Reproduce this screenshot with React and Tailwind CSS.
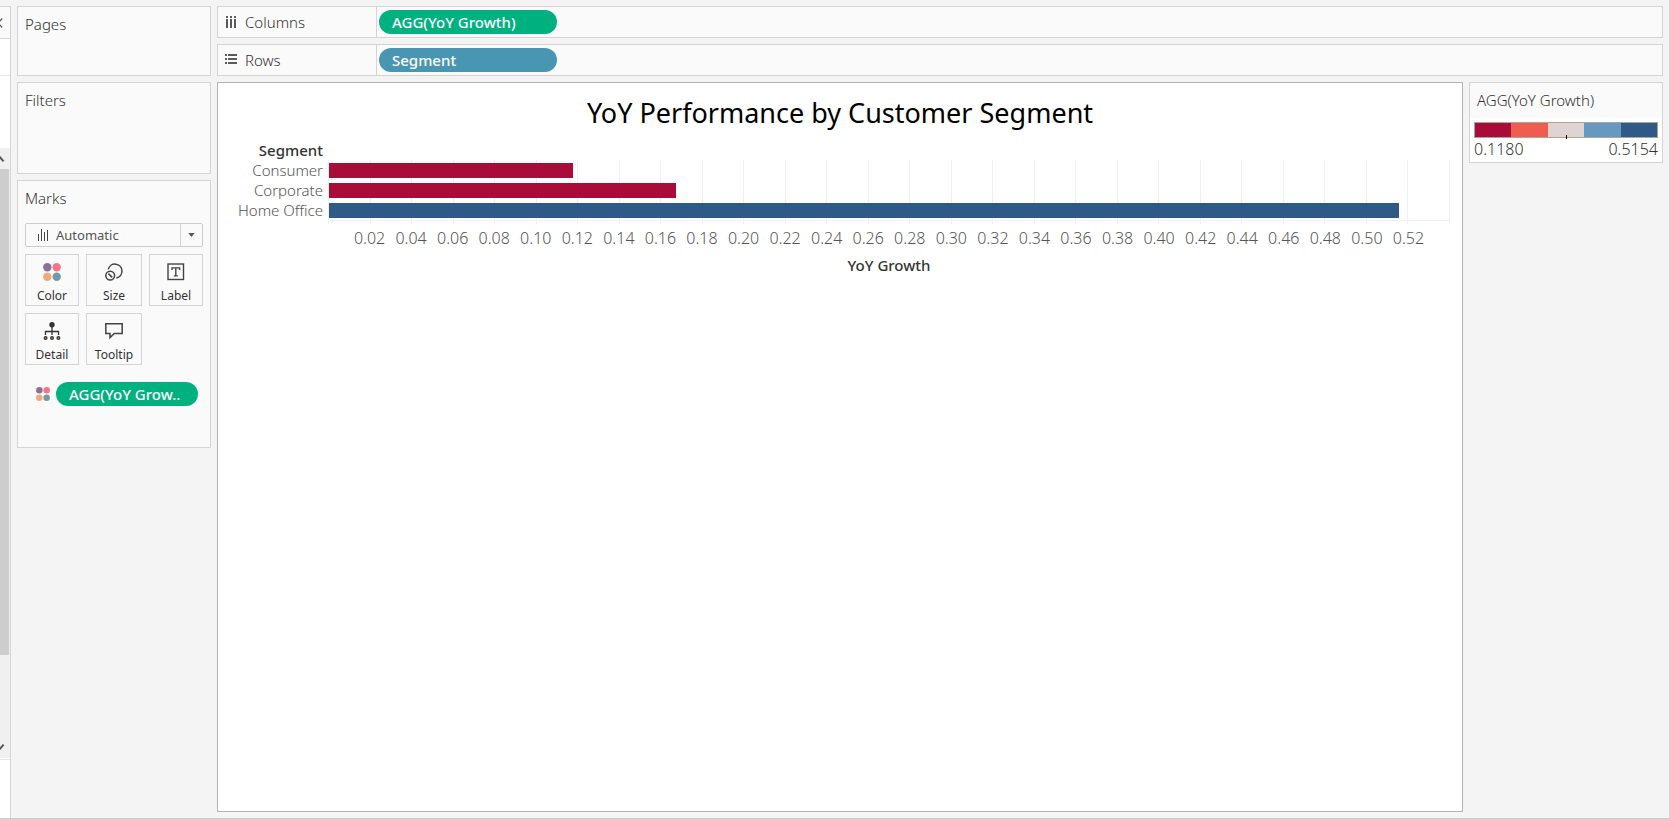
const ticks = Array.from({ length: 26 }, (_, i) => ((i + 1) * 0.02).toFixed(2));
const AXIS_MAX = 0.54;

const segments = [
  { name: "Consumer", value: 0.118, color: "bg-[#a90c38]" },
  { name: "Corporate", value: 0.1676, color: "bg-[#a90c38]" },
  { name: "Home Office", value: 0.5154, color: "bg-[#2e5a87]" },
];

const legendColors = ["bg-[#a90c38]", "bg-[#f15c50]", "bg-[#dfd4d1]", "bg-[#6798c1]", "bg-[#2e5a87]"];

function ColorDots({ className }) {
  return (
    <svg viewBox="0 0 18 18" className={className} aria-hidden="true">
      <circle cx="4.3" cy="4.3" r="4.2" fill="#8a7199" />
      <circle cx="13.7" cy="4.3" r="4.2" fill="#f87484" />
      <circle cx="4.3" cy="13.7" r="4.2" fill="#f3a77f" />
      <circle cx="13.7" cy="13.7" r="4.2" fill="#729aa8" />
    </svg>
  );
}

function SizeIcon() {
  return (
    <svg viewBox="0 0 18 18" className="h-[18px] w-[18px]" fill="none" stroke="#444" strokeWidth="1.5" aria-hidden="true">
      <path d="M3.2 6.4A7 7 0 1 1 11.3 15" />
      <circle cx="5.2" cy="12.6" r="4.4" />
      <path d="M3.4 10.6l3.8 3.8" />
    </svg>
  );
}

function LabelIcon() {
  return (
    <svg viewBox="0 0 18 18" className="h-[18px] w-[18px]" fill="none" stroke="#444" aria-hidden="true">
      <rect x="1" y="1" width="15.5" height="15.5" strokeWidth="1.4" />
      <path d="M5 7V4.9h7.6V7M8.8 4.9v8M6.8 12.9h4" strokeWidth="1.4" />
    </svg>
  );
}

function DetailIcon() {
  return (
    <svg viewBox="0 0 18 18" className="h-[18px] w-[18px]" fill="none" stroke="#333" aria-hidden="true">
      <circle cx="9" cy="2.8" r="2.7" fill="#333" stroke="none" />
      <path d="M9 5v8M2.5 13V9.5h13V13" strokeWidth="1.3" />
      <circle cx="2.6" cy="16" r="1.3" strokeWidth="1.4" />
      <circle cx="9" cy="16" r="1.3" strokeWidth="1.4" />
      <circle cx="15.4" cy="16" r="1.3" strokeWidth="1.4" />
    </svg>
  );
}

function TooltipIcon() {
  return (
    <svg viewBox="0 0 18 18" className="h-[18px] w-[18px]" fill="none" stroke="#444" strokeWidth="1.5" aria-hidden="true">
      <path d="M.8 1.7h16.4v9.8H9.2L5 15.6v-4.1H.8z" />
    </svg>
  );
}

function ColumnsIcon() {
  return (
    <svg viewBox="0 0 12 12" className="h-3 w-3" fill="#5a5a5a" aria-hidden="true">
      <path d="M1 0h2v2H1zM5 0h2v2H5zM9 0h2v2H9zM1 3h2v9H1zM5 3h2v9H5zM9 3h2v9H9z" />
    </svg>
  );
}

function RowsIcon() {
  return (
    <svg viewBox="0 0 12 12" className="h-3 w-3" fill="#5a5a5a" aria-hidden="true">
      <path d="M0 0h2v2H0zM0 4h2v2H0zM0 8h2v2H0zM3 0h9v2H3zM3 4h9v2H3zM3 8h9v2H3z" />
    </svg>
  );
}

function Card({ title, className, children }) {
  return (
    <section className={`border border-[#d4d4d4] bg-[#fafafa] px-[7px] pt-[5px] ${className}`}>
      <h2 className="text-[15px] leading-6">{title}</h2>
      {children}
    </section>
  );
}

function Pill({ className, children }) {
  return (
    <button type="button" className={`h-6 rounded-full text-left text-[15px] leading-6 font-medium text-white ${className}`}>
      {children}
    </button>
  );
}

function Shelf({ icon, label, children }) {
  return (
    <section className="flex h-8 border border-[#d4d4d4] bg-[#fafafa]">
      <div className="flex w-[159px] items-center gap-2 border-r border-[#d4d4d4] pl-[7px]">
        {icon}
        <h2 className="text-[15px] leading-6">{label}</h2>
      </div>
      <div className="flex flex-1 items-center pl-0.5">{children}</div>
    </section>
  );
}

function MarkButton({ icon, label }) {
  return (
    <button type="button" className="flex h-[52px] flex-col items-center justify-between border border-[#d4d4d4] pt-2 text-[12px] leading-4 font-normal text-[#333]">
      {icon}
      <span className="pb-px">{label}</span>
    </button>
  );
}

function DataPane() {
  return (
    <aside className="mt-1.5 flex w-[11px] shrink-0 flex-col border-t border-r border-[#d4d4d4] bg-white">
      <button type="button" aria-label="Collapse" className="flex h-8 items-center border-b border-[#d4d4d4] bg-[#fafafa]">
        <svg viewBox="0 0 10 12" className="h-3 w-2.5" fill="none" stroke="#555" strokeWidth="1.3" aria-hidden="true">
          <path d="M2.2 1.5L-2 6l4.2 4.5" />
        </svg>
      </button>
      <div className="h-[37px] border-b border-[#e6e6e6]" />
      <div className="h-[72px]" />
      <div className="flex flex-1 flex-col bg-[#f0f0f0]">
        <svg viewBox="0 0 10 21" className="h-[21px] w-2.5" fill="none" stroke="#555" strokeWidth="2" aria-hidden="true">
          <path d="M-1 8l4.6 5.4" />
        </svg>
        <div className="w-[9px] flex-[486] bg-[#cdcdcd]" />
        <div className="flex-[82]" />
        <svg viewBox="0 0 10 21" className="h-[21px] w-2.5" fill="none" stroke="#555" strokeWidth="2" aria-hidden="true">
          <path d="M-1 13l4.6-5.4" />
        </svg>
      </div>
      <div className="mt-px h-[59px] border-t border-[#e6e6e6]" />
    </aside>
  );
}

function Chart() {
  return (
    <div className="grid grid-cols-[110px_minmax(0,1fr)] pr-3 text-[15px] text-[#555]">
      <div className="pr-[5px] text-right leading-5">
        <div className="font-medium text-[#333]">Segment</div>
        {segments.map((s) => (
          <div key={s.name}>{s.name}</div>
        ))}
      </div>
      <div className="grid pt-5">
        <div className="col-start-1 row-start-1 flex h-16 border-l border-[#f0f0f0]">
          {Array.from({ length: 27 }, (_, i) => (
            <div key={i} className="flex-1 border-r border-[#f0f0f0]" />
          ))}
        </div>
        <div className="col-start-1 row-start-1 flex h-[61px] flex-col gap-[5px] border-b border-[#f0f0f0] pt-[3px]">
          {segments.map((s) => (
            <div key={s.name} className="h-[15px] pl-px" style={{ width: `${(s.value / AXIS_MAX) * 100}%` }}>
              <div className={`h-full ${s.color}`} />
            </div>
          ))}
        </div>
      </div>
      <div className="col-start-2 grid grid-cols-[repeat(54,minmax(0,1fr))] pt-1 text-center text-[16px] leading-5">
        {ticks.map((t) => (
          <span key={t} className="col-span-2 first:col-start-2">{t}</span>
        ))}
      </div>
      <div className="col-start-2 pt-[7px] text-center leading-5 font-medium text-[#333]">YoY Growth</div>
    </div>
  );
}

export default function App() {
  return (
    <div className="flex min-h-screen flex-col border-b border-[#cdcdcd] bg-[#f4f4f4] font-['Noto_Sans',sans-serif] font-light text-[#333]">
      <div className="flex flex-1">
        <DataPane />
        <div className="flex w-[206px] shrink-0 flex-col gap-1.5 p-1.5">
          <Card title="Pages" className="h-[70px]" />
          <Card title="Filters" className="h-[92px]" />
          <Card title="Marks" className="h-[268px]">
            <div className="relative mt-[13px] flex h-6 items-center">
              <select aria-label="Mark type" className="h-6 w-full appearance-none rounded-xs border border-[#cdcdcd] bg-transparent pl-[30px] text-[13px] leading-5 font-normal text-[#555]">
                <option>Automatic</option>
              </select>
              <svg viewBox="0 0 12 12" className="pointer-events-none absolute left-[13px] h-3 w-3" fill="#444" aria-hidden="true">
                <path d="M0 5h1v7H0zM3 0h1v12H3zM6 3h1v9H6zM9 1h1v11H9z" />
              </svg>
              <span className="pointer-events-none absolute right-px flex h-[22px] w-[22px] items-center justify-center border-l border-[#d4d4d4]">
                <svg viewBox="0 0 8 5" className="h-1 w-[7px]" fill="#555" aria-hidden="true">
                  <path d="M0 0h8L4 5z" />
                </svg>
              </span>
            </div>
            <div className="mt-[7px] grid grid-cols-[54fr_56fr_54fr] gap-[7px]">
              <MarkButton icon={<ColorDots className="h-[18px] w-[18px]" />} label="Color" />
              <MarkButton icon={<SizeIcon />} label="Size" />
              <MarkButton icon={<LabelIcon />} label="Label" />
              <MarkButton icon={<DetailIcon />} label="Detail" />
              <MarkButton icon={<TooltipIcon />} label="Tooltip" />
            </div>
            <div className="mt-[17px] flex items-center gap-1.5 pr-[5px] pl-[11px]">
              <ColorDots className="h-3.5 w-3.5" />
              <Pill className="flex-1 bg-[#00b180] pl-[13px]">AGG(YoY Grow..</Pill>
            </div>
          </Card>
        </div>
        <div className="flex min-w-0 flex-1 flex-col gap-1.5 py-1.5 pr-1.5">
          <Shelf icon={<ColumnsIcon />} label="Columns">
            <Pill className="w-[178px] bg-[#00b180] pl-[13px]">AGG(YoY Growth)</Pill>
          </Shelf>
          <Shelf icon={<RowsIcon />} label="Rows">
            <Pill className="w-[178px] bg-[#4996b2] pl-[13px]">Segment</Pill>
          </Shelf>
          <div className="flex flex-1 items-start gap-1.5">
            <main className="min-w-0 flex-1 self-stretch border border-[#b4b4b4] bg-white">
              <h1 className="pt-[11px] pb-2 text-center text-[27px] leading-[38px] font-normal text-black">
                YoY Performance by Customer Segment
              </h1>
              <Chart />
            </main>
            <aside className="w-[194px] shrink-0 border border-[#d4d4d4] bg-white text-[16px]">
              <h2 className="h-[35px] bg-[#fafafa] pt-[5px] pl-[7px] text-[15px] leading-6">AGG(YoY Growth)</h2>
              <div className="px-1 pt-1 pb-0.5">
                <div className="relative flex h-4 border border-[#aaa594]">
                  {legendColors.map((c) => (
                    <div key={c} className={`flex-1 ${c}`} />
                  ))}
                  <span className="absolute -bottom-0.5 left-1/2 h-1 w-px bg-black" />
                </div>
                <div className="flex justify-between leading-[22px]">
                  <span>0.1180</span>
                  <span>0.5154</span>
                </div>
              </div>
            </aside>
          </div>
        </div>
      </div>
    </div>
  );
}
